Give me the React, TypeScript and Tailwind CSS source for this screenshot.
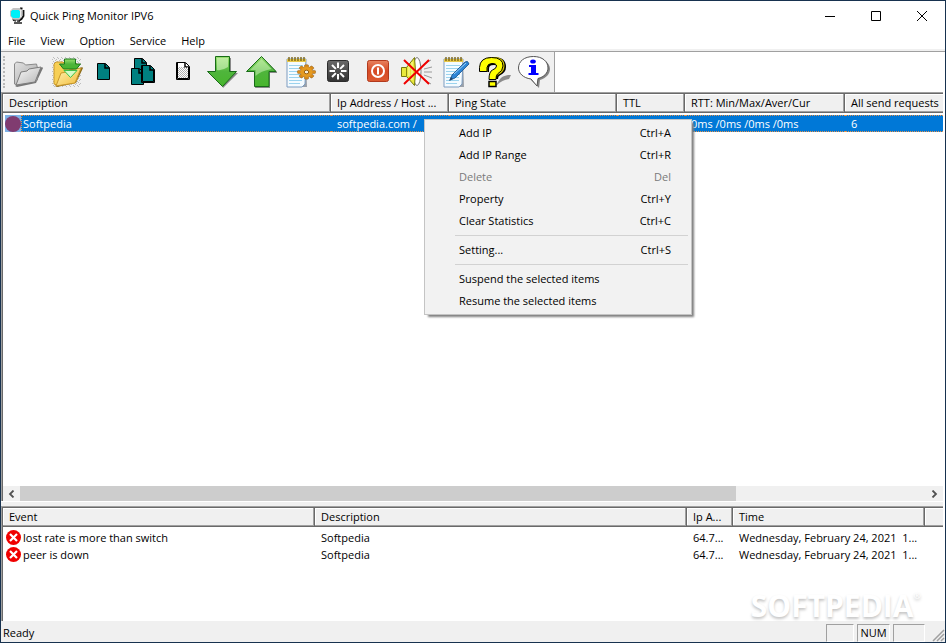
import type { ReactNode } from "react";

const page = (x: number, y: number, w: number, h: number, fill: string) => (
  <g>
    <path
      d={`M${x + 0.5} ${y + 0.5}h${w - 5}l4 4v${h - 5}h-${w - 1}z`}
      fill={fill}
      stroke="#000"
      strokeWidth="1"
    />
    <path d={`M${x + w - 5} ${y + 1}v4h4`} fill="none" stroke="#000" strokeWidth="1.5" />
  </g>
);

const spokes = [0, 45, 90, 135, 180, 225, 270, 315];

function Notepad({ x }: { x: number }) {
  return (
    <g>
      <path d={`M${x + 1} 7h18l1 28h-19z`} fill="#9aa0a8" />
      <path d={`M${x} 7h19l-1 25-3 3h-15z`} fill="#f4fbff" stroke="#7c9cc0" strokeWidth="1" />
      <path
        d={`M${x + 2} 13.5h14M${x + 2} 16.5h14M${x + 2} 19.5h14M${x + 2} 22.5h14M${x + 2} 25.5h13M${x + 2} 28.5h13M${x + 2} 31.5h11`}
        stroke="#9bd3ee"
        strokeWidth="1"
      />
      <path d={`M${x} 7h19v3h-19z`} fill="#e8c84a" />
      <path
        d={`M${x + 2} 5v4M${x + 5} 5v4M${x + 8} 5v4M${x + 11} 5v4M${x + 14} 5v4M${x + 17} 5v4`}
        stroke="#7b6416"
        strokeWidth="1.4"
      />
    </g>
  );
}

const tools: { label: string; art: ReactNode }[] = [
  {
    label: "Open",
    art: (
      <g strokeLinejoin="round">
        <path d="M7 34l2 1 19-4 7-15-1-1z" fill="#777" />
        <path d="M6.500 12l2-2 7 1 2 2 11-1 1 4v12l-20 5-3-1z" fill="url(#grayBack)" stroke="#8a8a8a" />
        <path d="M13 20l6-1 2-2 12-2-6 15-19 3z" fill="url(#grayFront)" stroke="#7c7c7c" />
      </g>
    ),
  },
  {
    label: "Import",
    art: (
      <g strokeLinejoin="round">
        <rect x="5" y="5" width="29" height="30" fill="url(#speckle)" />
        <path d="M8 34l2 1 19-4 7-15-1-1z" fill="#8b6a17" />
        <path d="M7 12l2-2 7 0 2 2 11-1 1 4v13l-20 5-3-1z" fill="#f7cf55" stroke="#c9982a" />
        <path d="M14 21l6-1 2-2 12-2-6 15-19 3z" fill="url(#yellowFront)" stroke="#c9982a" />
        <path d="M17 18.500h13l-6.500 7z" fill="#d6fbc8" stroke="#42c24a" />
        <path d="M17.500 7h11v5h5l-4 5h-13l-4-5h5z" fill="url(#green)" stroke="#1c7a1c" />
      </g>
    ),
  },
  { label: "Add IP", art: page(11, 11, 13, 17, "#008080") },
  {
    label: "Add IP range",
    art: (
      <g>
        {page(9, 6, 13, 17, "#008080")}
        {page(6, 16, 13, 17, "#008080")}
        {page(16, 13, 14, 18, "#008080")}
        <path d="M17.500 14v15.500h11V18" fill="none" stroke="#000" />
      </g>
    ),
  },
  {
    label: "Property",
    art: (
      <g>
        {page(12, 10, 14, 18, "#fff")}
        <rect x="14" y="15" width="10" height="11" fill="url(#checker)" />
        <path d="M13.500 11v15.500h11V15" fill="none" stroke="#000" />
      </g>
    ),
  },
  {
    label: "Move down",
    art: (
      <g>
        <path d="M13 6h15v15h7l-15 15z" fill="#888" />
        <path d="M12.500 4.500h14v15h7L19.500 34.500 4.500 19.500h8z" fill="url(#green)" stroke="#176b17" />
        <path d="M14 6h11v9q-6 4-11 3z" fill="#d8f7c4" opacity=".6" />
      </g>
    ),
  },
  {
    label: "Move up",
    art: (
      <g>
        <path d="M20 5l15 15v1h-7v15H13z" fill="#888" />
        <path d="M19.500 4.500l14.500 15h-7v15H12.500v-15H4.500z" fill="url(#green)" stroke="#176b17" />
        <path d="M19.500 7l10 10q-11 2-16 7v-6H8z" fill="#d8f7c4" opacity=".5" />
      </g>
    ),
  },
  {
    label: "Settings",
    art: (
      <g>
        <Notepad x={6} />
        <g transform="translate(25.500 20)">
          {spokes.map((a) => (
            <rect key={a} x="-2" y="-9" width="4" height="5" rx="1" fill="#d98a18" stroke="#94601a" strokeWidth=".6" transform={`scale(1 .8) rotate(${a})`} />
          ))}
          <ellipse rx="6" ry="5" fill="#e59a20" />
          <ellipse rx="2.200" ry="1.800" fill="#f6f1e0" stroke="#94601a" />
        </g>
      </g>
    ),
  },
  {
    label: "Start",
    art: (
      <g>
        <rect x="7.500" y="8.500" width="21" height="21" rx="2" fill="url(#dark)" stroke="#2c2c2c" />
        {spokes.map((a) => (
          <path key={a} d="M18 16v-5.500" stroke="#fff" strokeWidth="2" transform={`rotate(${a} 18 19)`} />
        ))}
      </g>
    ),
  },
  {
    label: "Stop",
    art: (
      <g>
        <rect x="8.500" y="8.500" width="21" height="21" rx="2" fill="url(#red)" stroke="#b23a1d" />
        <circle cx="19" cy="19" r="6" fill="none" stroke="#fff" strokeWidth="2" />
        <path d="M19 15.500v7" stroke="#fff" strokeWidth="2" />
      </g>
    ),
  },
  {
    label: "Mute",
    art: (
      <g>
        <path d="M25 13l8-5M26 17l8-2M26 20h8M26 23l8 3M25 27l8 5" stroke="#9a9a9a" />
        <ellipse cx="19" cy="19.500" rx="4" ry="14" fill="#fff" stroke="#777" />
        <path d="M3.500 15.500h5l8-10q2 14 0 28l-8-9h-5z" fill="#e9e93c" stroke="#77770c" />
        <path d="M8.500 15.500v9" stroke="#8a8a10" />
        <path d="M11 14v10M14 10v18" stroke="#fbfbb0" />
        <path d="M6 8l25 24M31 8L6 32" stroke="#f00000" strokeWidth="2" />
      </g>
    ),
  },
  {
    label: "Log",
    art: (
      <g>
        <Notepad x={7} />
        <path d="M13 28l2-5L28 10q3-2 4 2L18 26z" fill="#2f86d6" stroke="#174f8a" strokeWidth=".8" />
        <path d="M17 22L29 11" stroke="#9bd0f7" />
        <path d="M12 29l2-4 2 2z" fill="#24466b" />
      </g>
    ),
  },
  {
    label: "Help",
    art: (
      <g fill="none">
        <path d="M20 33l4-6q2-3 8-4h3l-2 4q-7 1-12 6z" fill="#8c8c8c" />
        <path d="M9 20v-3q0-8 9-8 8 0 8 6 0 3-4 5t-4 7" stroke="#000" strokeWidth="8" />
        <path d="M8.500 20v-4q0-8 8.500-8 8.500 0 8.500 6 0 4-4.500 6t-4 7" stroke="#d8c800" strokeWidth="6" />
        <path d="M3.500 19.500v-4Q4 5.500 15.500 5.500T27 14q0 5-5.500 8-1.500 1-1.500 5.500h-7q0-8 3.500-9.500 4-1.500 4-4t-4.500-2.500-5 4v4z" fill="#ff0" stroke="#000" />
        <rect x="13" y="29.500" width="7" height="5" fill="#ff0" stroke="#000" strokeWidth="1.500" />
      </g>
    ),
  },
  {
    label: "About",
    art: (
      <g>
        <path d="M20 6c9 0 15 5 15 11 0 5-4 9-10 11l-1 8-8-8z" fill="#858585" />
        <path
          d="M18.500 4.500c9 0 14.500 5 14.500 11.500 0 5-4 9-10 10.500l-1 7.500-6-7C8 26 3.500 21 3.500 16 3.500 9.500 9 4.500 18.500 4.500z"
          fill="#fff"
          stroke="#555"
        />
        <ellipse cx="18" cy="9.500" rx="2.800" ry="2" fill="#00f" />
        <path d="M14 13h7v8h2.500v2h-10v-2H16v-6h-2z" fill="#00f" />
      </g>
    ),
  },
];

function Defs() {
  return (
    <svg className="absolute size-0" aria-hidden="true">
      <defs>
        <linearGradient id="green" x1="0" y1="0" x2="0" y2="1">
          <stop offset="0" stopColor="#9be070" />
          <stop offset=".5" stopColor="#4fb53c" />
          <stop offset="1" stopColor="#47b52c" />
        </linearGradient>
        <linearGradient id="grayBack" x1="0" y1="0" x2="1" y2="1">
          <stop offset="0" stopColor="#e2e2e2" />
          <stop offset="1" stopColor="#a8a8a8" />
        </linearGradient>
        <linearGradient id="grayFront" x1="0" y1="0" x2="1" y2="1">
          <stop offset="0" stopColor="#fafafa" />
          <stop offset="1" stopColor="#b4b4b4" />
        </linearGradient>
        <linearGradient id="yellowFront" x1="0" y1="0" x2="1" y2="1">
          <stop offset="0" stopColor="#fff6b8" />
          <stop offset="1" stopColor="#f2b935" />
        </linearGradient>
        <linearGradient id="dark" x1="0" y1="0" x2="0" y2="1">
          <stop offset="0" stopColor="#6a6a6a" />
          <stop offset="1" stopColor="#333" />
        </linearGradient>
        <linearGradient id="red" x1="0" y1="0" x2="0" y2="1">
          <stop offset="0" stopColor="#e8825f" />
          <stop offset=".5" stopColor="#d64a25" />
          <stop offset="1" stopColor="#dc5a30" />
        </linearGradient>
        <pattern id="checker" width="2" height="2" patternUnits="userSpaceOnUse">
          <path d="M0 0h1v1H0zM1 1h1v1H1z" fill="#b0b0b0" />
        </pattern>
        <pattern id="speckle" width="4" height="4" patternUnits="userSpaceOnUse">
          <path d="M0 0h1v1H0zM2 1h1v1H2zM1 3h1v1H1zM3 2h1v1H3z" fill="#bdbdbd" />
        </pattern>
      </defs>
    </svg>
  );
}

function AppIcon() {
  return (
    <svg width="18" height="18" viewBox="0 0 18 18" aria-hidden="true">
      <path d="M11 1.500h2.500M14.500 3v6l-2 3-3 2" fill="none" stroke="#111" strokeWidth="1.800" />
      <path d="M5 16h8M8 14h3M4 13l3 1" stroke="#222" strokeWidth="1.600" />
      <path d="M1 4l3-3h7l2 3v5l-3 4H5L1 9z" fill="#c4c4c4" />
      <path d="M2 4h1V3h7v1h2v4l-2 3H4L2 9z" fill="#00f0f8" />
      <path d="M3 12l3 1h4l2-2" fill="none" stroke="#777" />
      <path d="M11.500 3v7" stroke="#eee" />
    </svg>
  );
}

function ErrorIcon() {
  return (
    <svg className="shrink-0" width="16" height="16" viewBox="0 0 16 16" aria-hidden="true">
      <circle cx="7.500" cy="7.500" r="7.500" fill="#f00000" />
      <path d="M4 4l7 7M11 4l-7 7" stroke="#fff" strokeWidth="2.200" />
    </svg>
  );
}

const th =
  "h-[19px] overflow-hidden border-r border-b border-[#696969] bg-[#f0f0f0] p-0 pt-px pl-1.5 text-left font-normal text-ellipsis shadow-[inset_-1px_-1px_#a0a0a0,inset_1px_1px_#fff] last:border-r-0 last:shadow-[inset_0_-1px_#a0a0a0,inset_1px_1px_#fff]";
const selected = "h-[17px] overflow-hidden border-y border-dotted border-[#e8934a] bg-[#0078d7] p-0 pl-1.5 text-white leading-[15px]";
const cell = "h-[17px] overflow-hidden p-0 pl-1.5 text-ellipsis leading-[17px]";

const menuGroups = [
  [
    { label: "Add IP", keys: "Ctrl+A" },
    { label: "Add IP Range", keys: "Ctrl+R" },
    { label: "Delete", keys: "Del", disabled: true },
    { label: "Property", keys: "Ctrl+Y" },
    { label: "Clear Statistics", keys: "Ctrl+C" },
  ],
  [{ label: "Setting...", keys: "Ctrl+S" }],
  [{ label: "Suspend the selected items" }, { label: "Resume the selected items" }],
] as { label: string; keys?: string; disabled?: boolean }[][];

function ContextMenu() {
  return (
    <div
      role="menu"
      className="absolute top-[118px] left-[423px] z-10 w-[268px] border border-[#c4c4c4] bg-[#f2f2f2] p-0.5 shadow-[3px_3px_2px_-1px_#808080]"
    >
      {menuGroups.map((group, i) => (
        <div key={i} className={i ? "before:mt-[3px] before:mr-px before:mb-[3px] before:ml-7 before:block before:h-px before:bg-[#d2d2d2]" : ""}>
          {group.map((item) => (
            <button
              key={item.label}
              role="menuitem"
              disabled={item.disabled}
              className="flex h-[22px] w-full items-center justify-between pr-[18px] pl-8 disabled:text-[#7a7a7a]"
            >
              <span>{item.label}</span>
              <span>{item.keys}</span>
            </button>
          ))}
        </div>
      ))}
    </div>
  );
}

const events = ["lost rate is more than switch", "peer is down"];

export default function App() {
  return (
    <div className="relative flex h-screen flex-col overflow-hidden border border-[#17324f] bg-white font-['Open_Sans','Noto_Sans',sans-serif] text-[11px] whitespace-nowrap text-black">
      <Defs />
      <header className="flex h-[29px] shrink-0 items-center pl-2">
        <AppIcon />
        <h1 className="flex-1 pt-px pl-[3px]">Quick Ping Monitor IPV6</h1>
        <button aria-label="Minimize" className="flex h-full w-[46px] items-center justify-center">
          <svg width="10" height="10"><path d="M0 5.500h10" stroke="#000" /></svg>
        </button>
        <button aria-label="Maximize" className="flex h-full w-[46px] items-center justify-center">
          <svg width="10" height="10"><path d="M.5.5h9v9h-9z" fill="none" stroke="#000" /></svg>
        </button>
        <button aria-label="Close" className="flex h-full w-[46px] items-center justify-center">
          <svg width="10" height="10"><path d="M0 0l10 10M10 0L0 10" stroke="#000" /></svg>
        </button>
      </header>

      <nav className="flex h-[21px] shrink-0 items-center gap-[15px] border-b-2 border-[#f0f0f0] pt-[3px] pl-[7px]">
        {["File", "View", "Option", "Service", "Help"].map((m) => (
          <button key={m}>{m}</button>
        ))}
      </nav>

      <div className="flex h-[41px] shrink-0 border-t border-[#a0a0a0]">
        <div role="toolbar" className="flex border-r border-[#a0a0a0] bg-[#f0f0f0]">
          <div className="my-1 mr-[3px] ml-0.5 w-0.5 border-l-2 border-dotted border-[#b8b8b8]" />
          {tools.map((t) => (
            <button key={t.label} aria-label={t.label} title={t.label}>
              <svg width="39" height="40" viewBox="0 0 39 40" aria-hidden="true">{t.art}</svg>
            </button>
          ))}
        </div>
      </div>

      <main className="mr-0.5 flex min-h-0 flex-1 flex-col">
        <section className="flex min-h-0 flex-1 flex-col border-t border-l border-[#a0a0a0]">
          <div className="flex min-h-0 flex-1 flex-col border-t border-l border-[#696969]">
            <div className="min-h-0 flex-1 overflow-hidden">
              <table className="w-full table-fixed border-separate border-spacing-0">
                <colgroup>
                  <col className="w-[328px]" />
                  <col className="w-[118px]" />
                  <col className="w-[168px]" />
                  <col className="w-[68px]" />
                  <col className="w-[160px]" />
                  <col />
                </colgroup>
                <thead>
                  <tr>
                    <th className={th}>Description</th>
                    <th className={th}>Ip Address / Host ...</th>
                    <th className={th}>Ping State</th>
                    <th className={th}>TTL</th>
                    <th className={th}>RTT: Min/Max/Aver/Cur</th>
                    <th className={th}>All send requests</th>
                  </tr>
                </thead>
                <tbody className="before:block before:h-0.5">
                  <tr>
                    <td className="p-0 pl-0.5">
                      <div className="flex h-[17px]">
                        <span className="flex w-4 items-center bg-[#7fb2e6]">
                          <span className="size-4 rounded-full bg-[#803c70]" />
                        </span>
                        <span className="flex-1 border border-r-0 border-dotted border-[#e8934a] bg-[#0078d7] pl-px leading-[15px] text-white">
                          Softpedia
                        </span>
                      </div>
                    </td>
                    <td className={selected}>softpedia.com /</td>
                    <td className={selected} />
                    <td className={selected} />
                    <td className={selected}>0ms /0ms /0ms /0ms</td>
                    <td className={selected}>6</td>
                  </tr>
                </tbody>
              </table>
            </div>
            <div className="flex h-[15px] shrink-0 bg-[#f0f0f0]">
              <button aria-label="Scroll left" className="flex w-[17px] items-center justify-center">
                <svg width="7" height="8" viewBox="0 0 7 8"><path d="M5.500 .5L2 4l3.500 3.500" fill="none" stroke="#505050" strokeWidth="1.800" /></svg>
              </button>
              <div className="flex flex-1">
                <div className="w-[79%] bg-[#cdcdcd]" />
              </div>
              <button aria-label="Scroll right" className="flex w-[17px] items-center justify-center">
                <svg width="7" height="8" viewBox="0 0 7 8"><path d="M1.500 .5L5 4 1.500 7.500" fill="none" stroke="#505050" strokeWidth="1.800" /></svg>
              </button>
            </div>
          </div>
        </section>

        <div className="h-[5px] shrink-0 border-t border-white bg-[#f0f0f0]" />

        <section className="h-[115px] shrink-0 border-t border-l border-[#a0a0a0]">
          <div className="h-full border-t border-l border-[#696969]">
            <table className="w-full table-fixed border-separate border-spacing-0">
              <colgroup>
                <col className="w-[312px]" />
                <col className="w-[372px]" />
                <col className="w-[46px]" />
                <col className="w-[192px]" />
                <col />
              </colgroup>
              <thead>
                <tr>
                  <th className={th}>Event</th>
                  <th className={th}>Description</th>
                  <th className={th}>Ip A...</th>
                  <th className={th}>Time</th>
                  <th className={th} />
                </tr>
              </thead>
              <tbody className="before:block before:h-0.5">
                {events.map((e) => (
                  <tr key={e}>
                    <td className="p-0 pl-[3px]">
                      <div className="flex h-[17px] items-center gap-px leading-[17px]">
                        <ErrorIcon />
                        {e}
                      </div>
                    </td>
                    <td className={cell}>Softpedia</td>
                    <td className={cell}>64.7...</td>
                    <td className={cell}>Wednesday, February 24, 2021&nbsp; 1...</td>
                    <td />
                  </tr>
                ))}
              </tbody>
            </table>
          </div>
        </section>
      </main>

      <footer className="flex h-[21px] shrink-0 items-stretch gap-[3px] border-t-2 border-[#f0f0f0] bg-[#f0f0f0] pt-px">
        <span className="flex-1 pl-0.5 leading-[18px]">Ready</span>
        <span className="w-7 border border-[#a0a0a0] border-r-white border-b-white" />
        <span className="w-[33px] border border-[#a0a0a0] border-r-white border-b-white text-center leading-4">NUM</span>
        <span className="w-8 border border-[#a0a0a0] border-r-white border-b-white" />
        <svg width="17" height="18" viewBox="0 0 17 18" aria-hidden="true">
          <path d="M5 17L16 6M9 17l7-7M13 17l3-3" stroke="#a0a0a0" strokeWidth="1.500" />
        </svg>
      </footer>

      <div className="absolute right-[24px] bottom-[20px] flex items-start font-['Open_Sans',sans-serif] text-[30px] leading-8 font-bold text-white [text-shadow:0_2px_3px_#c4c4c4]">
        <span>SOFTPEDIA</span>
        <span className="text-[9px] leading-3">®</span>
      </div>

      <ContextMenu />
    </div>
  );
}
